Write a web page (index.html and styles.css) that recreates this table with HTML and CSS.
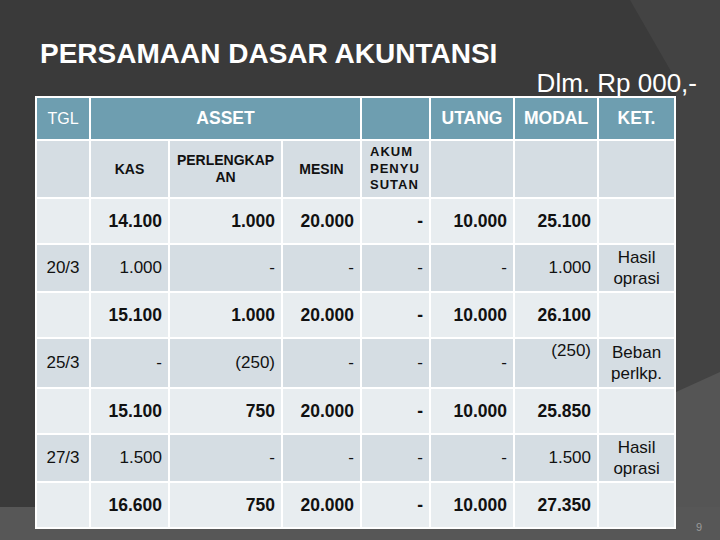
FILE: index.html
```html
<!DOCTYPE html>
<html lang="id">
<head>
<meta charset="utf-8">
<title>Persamaan Dasar Akuntansi</title>
<link rel="stylesheet" href="styles.css">
</head>
<body>
<div class="slide">
  <div class="bg">
    <svg width="720" height="540" viewBox="0 0 720 540">
      <rect x="0" y="0" width="720" height="540" fill="#3a3a3a"/>
      <polygon points="630,0 720,0 720,540 676,540 676,80" fill="#434343"/>
      <polygon points="676,392 720,372 720,540 676,540" fill="#555555"/>
      <rect x="0" y="507" width="720" height="33" fill="#575757"/>
    </svg>
  </div>
  <h1 class="title">PERSAMAAN DASAR AKUNTANSI</h1>
  <div class="unit">Dlm. Rp 000,-</div>
  <table class="grid">
    <colgroup>
      <col class="c-tgl"><col class="c-kas"><col class="c-perl"><col class="c-mesin"><col class="c-akum"><col class="c-utang"><col class="c-modal"><col class="c-ket">
    </colgroup>
    <tr class="head">
      <th class="tgl">TGL</th>
      <th colspan="3">ASSET</th>
      <th></th>
      <th>UTANG</th>
      <th>MODAL</th>
      <th>KET.</th>
    </tr>
    <tr class="sub">
      <td></td>
      <td>KAS</td>
      <td>PERLENGKAP<br>AN</td>
      <td>MESIN</td>
      <td class="akum">AKUM<br>PENYU<br>SUTAN</td>
      <td></td>
      <td></td>
      <td></td>
    </tr>
    <tr class="tot">
      <td></td><td>14.100</td><td>1.000</td><td>20.000</td><td>-</td><td>10.000</td><td>25.100</td><td></td>
    </tr>
    <tr class="tx">
      <td class="date">20/3</td><td>1.000</td><td>-</td><td>-</td><td>-</td><td>-</td><td>1.000</td><td class="ket">Hasil<br>oprasi</td>
    </tr>
    <tr class="tot">
      <td></td><td>15.100</td><td>1.000</td><td>20.000</td><td>-</td><td>10.000</td><td>26.100</td><td></td>
    </tr>
    <tr class="tx">
      <td class="date">25/3</td><td>-</td><td>(250)</td><td>-</td><td>-</td><td>-</td><td class="top">(250)</td><td class="ket">Beban<br>perlkp.</td>
    </tr>
    <tr class="tot">
      <td></td><td>15.100</td><td>750</td><td>20.000</td><td>-</td><td>10.000</td><td>25.850</td><td></td>
    </tr>
    <tr class="tx">
      <td class="date">27/3</td><td>1.500</td><td>-</td><td>-</td><td>-</td><td>-</td><td>1.500</td><td class="ket">Hasil<br>oprasi</td>
    </tr>
    <tr class="tot">
      <td></td><td>16.600</td><td>750</td><td>20.000</td><td>-</td><td>10.000</td><td>27.350</td><td></td>
    </tr>
  </table>
  <div class="page">9</div>
</div>
</body>
</html>
```
FILE: styles.css
```css
html, body {
  margin: 0;
  padding: 0;
}
body {
  background: #3a3a3a;
  font-family: "Liberation Sans", Arial, sans-serif;
}
.slide {
  position: relative;
  width: 720px;
  height: 540px;
  overflow: hidden;
}
.bg {
  position: absolute;
  left: 0;
  top: 0;
  width: 720px;
  height: 540px;
  z-index: 0;
}
.bg svg { display: block; }
.title {
  position: relative;
  margin: 0;
  padding: 37px 0 0 40px;
  font-size: 28px;
  line-height: 33px;
  font-weight: bold;
  color: #ffffff;
}
.unit {
  position: relative;
  text-align: right;
  padding-right: 23px;
  font-size: 26px;
  line-height: 26px;
  color: #ffffff;
}
.grid {
  position: relative;
  margin-left: 35px;
  width: 641px;
  table-layout: fixed;
  border-collapse: separate;
  border-spacing: 2px;
  background: #ffffff;
}
.c-tgl { width: 52px; }
.c-kas { width: 77px; }
.c-perl { width: 111px; }
.c-mesin { width: 77px; }
.c-akum { width: 67px; }
.c-utang { width: 82px; }
.c-modal { width: 82px; }
.c-ket { width: 75px; }

.grid th, .grid td {
  padding: 0 6px 0 0;
  overflow: hidden;
  white-space: nowrap;
}
.head th {
  background: #6e9eb0;
  color: #ffffff;
  height: 41px;
  font-size: 17.5px;
  font-weight: bold;
  text-align: center;
  padding: 0;
}
.head th.tgl {
  font-size: 16px;
  font-weight: normal;
}
.sub td {
  background: #d5dde3;
  height: 56px;
  font-size: 14px;
  font-weight: bold;
  text-align: center;
  line-height: 17px;
  color: #111111;
  padding: 0;
}
.sub td.akum {
  text-align: left;
  padding-left: 8px;
  font-size: 13px;
  letter-spacing: 1px;
  line-height: 16.5px;
}
.tot td {
  background: #e8edf0;
  height: 44px;
  font-size: 17.5px;
  font-weight: bold;
  text-align: right;
  color: #111111;
}
.tx td {
  background: #d5dde3;
  height: 46px;
  font-size: 17px;
  font-weight: normal;
  text-align: right;
  color: #111111;
}
.tx td.date {
  text-align: center;
  padding: 0;
}
.tx td.ket {
  text-align: center;
  line-height: 21px;
  padding: 0;
}
.tx td.top {
  vertical-align: top;
  padding-top: 2px;
}
.page {
  position: absolute;
  right: 18px;
  bottom: 7px;
  font-size: 11px;
  color: #9a9a9a;
}
```
